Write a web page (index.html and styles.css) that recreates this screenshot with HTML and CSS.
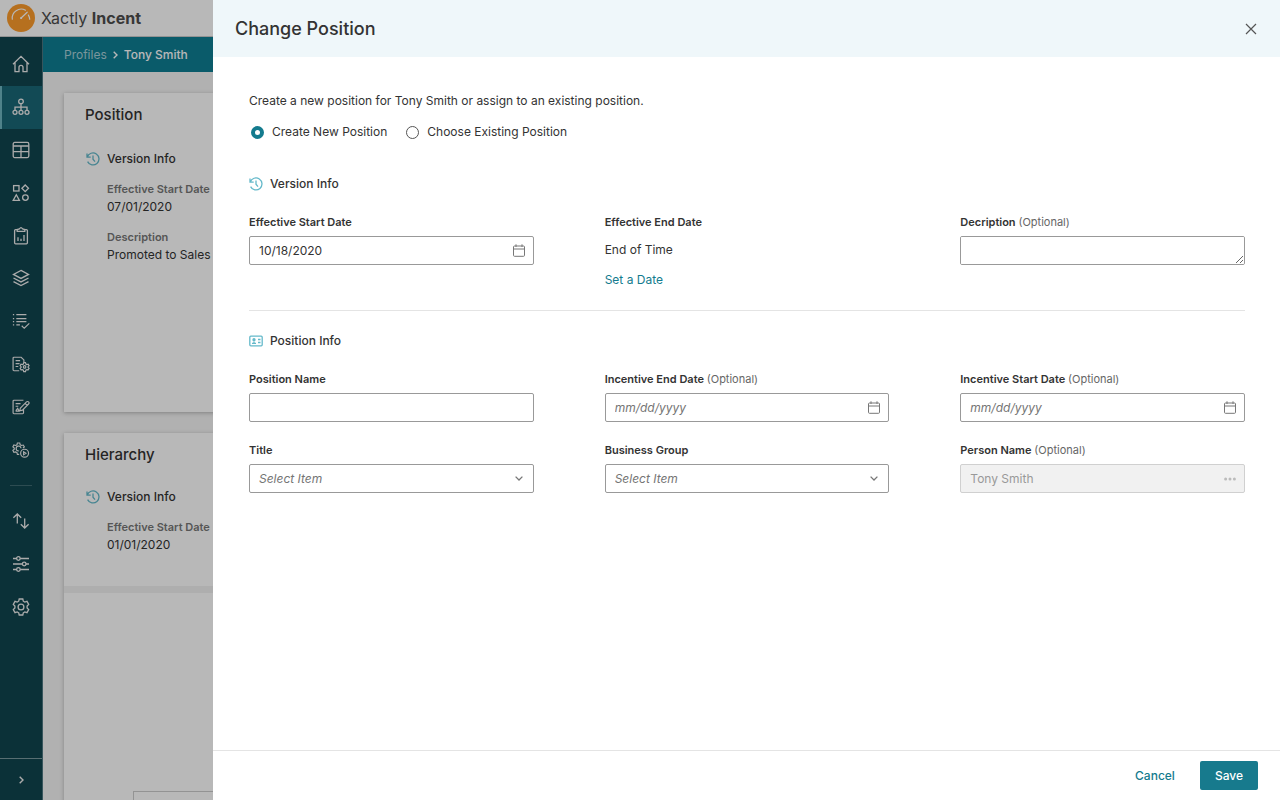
FILE: index.html
```html
<!doctype html>
<html lang="en">
<head>
<meta charset="utf-8">
<meta name="viewport" content="width=device-width, initial-scale=1">
<title>Change Position - Xactly Incent</title>
<link rel="stylesheet" href="styles.css">
</head>
<body>

<!-- shared icons -->
<svg class="sprite" aria-hidden="true">
	<symbol id="history" viewBox="0 0 14 14">
		<path d="M1 1.5v3.7h3.7M1.3 5A6 6 0 1 1 1.6 9.6M7 3.6v3.6l2 2.4" />
	</symbol>
	<symbol id="calendar" viewBox="0 0 12 13">
		<rect x=".5" y="2" width="11" height="10.3" rx="1" />
		<path d="M.5 5h11M3 .3V3M9 .3V3" />
	</symbol>
	<symbol id="chevron" viewBox="0 0 8 5">
		<path d="M.6 .6L4 4L7.4 .6" />
	</symbol>
</svg>

<div class="app">
	<header class="topbar">
		<svg class="logo" viewBox="0 0 28 28">
			<circle cx="14" cy="14" r="14" fill="#fc9c2c" />
			<path d="M5.3 15.2A9 9 0 0 1 18.5 6.2M20.2 8.2L13.8 14.2M21.4 11.1A9 9 0 0 1 22.7 15.2" fill="none" stroke="#fff" stroke-width="1.2" stroke-linecap="round" />
			<circle cx="14.2" cy="14" r="1" fill="#fff" />
		</svg>
		<span class="brand">Xactly <b>Incent</b></span>
	</header>

	<div class="main">
		<nav class="sidebar" aria-label="Main">
			<div class="nav-list">
				<a href="#" aria-label="Home"><svg viewBox="0 0 18 18"><path d="M1 9.2L9 1.4l8 7.8M3 7.6v9h4v-4.3a2 2 0 0 1 4 0v4.3h4v-9" /></svg></a>
				<a href="#" class="active" aria-label="Profiles"><svg viewBox="0 0 18 18"><circle cx="9" cy="3.4" r="2.3" /><circle cx="3" cy="14.3" r="2" /><circle cx="9" cy="14.3" r="2" /><circle cx="15" cy="14.3" r="2" /><path d="M9 5.7v6.6M3 12.3V9.2h12v3.1" /></svg></a>
				<a href="#" aria-label="Tables"><svg viewBox="0 0 18 18"><rect x="1.2" y="1.4" width="15.6" height="15.2" rx="1.5" /><path d="M1.2 5h15.6M1.2 10.7h15.6M9 5v11.6" /></svg></a>
				<a href="#" aria-label="Objects"><svg viewBox="0 0 18 18"><rect x="1.6" y="1.6" width="5.4" height="5.4" /><path d="M13.2 1l3.3 3.3l-3.3 3.3l-3.3-3.3zM4.3 10.8l3.1 5.6H1.2z" /><circle cx="13.4" cy="13.6" r="2.8" /></svg></a>
				<a href="#" aria-label="Reports"><svg viewBox="0 0 18 18"><path d="M5 2.6H3.6a1 1 0 0 0-1 1v12.2a1 1 0 0 0 1 1h10.8a1 1 0 0 0 1-1V3.6a1 1 0 0 0-1-1H13M5.2 4.4V2.6L7.4 2Q9-.6 10.6 2l2.2.6v1.8zM6 14v-3.7M9 14v-2.2M12 14V8" /></svg></a>
				<a href="#" aria-label="Plans"><svg viewBox="0 0 18 18"><path d="M9 1.4l7.5 4L9 9.4l-7.5-4zM1.5 9L9 12.9L16.5 9M1.5 12.6L9 16.6l7.5-4" /></svg></a>
				<a href="#" aria-label="Tasks"><svg viewBox="0 0 20 18"><path d="M1 2h1.4M1 6.3h1.4M1 9.7h1.4M1 13.3h1.4M4.8 2h11.200M4.8 6.3h11.2M4.8 9.7h11.2M4.8 13.3h4M10.8 14.3l2.8 2.8l5.6-5.4" /></svg></a>
				<a href="#" aria-label="Rules"><svg viewBox="0 0 20 18"><path d="M8 16.5H2.2a1 1 0 0 1-1-1v-13a1 1 0 0 1 1-1h8l3 3v2.4M4 5.2h5M4 8.5h4.4M4 11.8h3" /><circle cx="14" cy="12.2" r="1.4" /><path d="M13 7.5h2l.4 1.5l1.1.6l1.5-.4l1 1.7l-1.1 1.1v.8l1.1 1.1l-1 1.7l-1.5-.4l-1.1.6L15 17.4h-2l-.4-1.6l-1.1-.6l-1.5.4l-1-1.7l1.1-1.1V12L9 10.9l1-1.7l1.5.4l1.1-.6z" /></svg></a>
				<a href="#" aria-label="Edit documents"><svg viewBox="0 0 20 18"><path d="M12.8 11.5v4a1 1 0 0 1-1 1H2.2a1 1 0 0 1-1-1v-13a1 1 0 0 1 1-1h10.5M4 5.2h5.5M4 8.2h3M4 13.5h5M4.3 13l2-2.5l1.2 2.5M9.3 10.2l6.8-6.8a1.6 1.6 0 0 1 2.3 2.3l-6.8 6.8l-3 .7zM14.6 5l2.2 2.2" /></svg></a>
				<a href="#" aria-label="Run processes"><svg viewBox="0 0 20 18"><path d="M8 13.8H6l-.5-1.9l-1.4-.8l-2 .4L1 9.5l1.5-1.3V6.7L1 5.5l1.1-2l2 .5l1.4-.8L6 1.2h2.6l.5 2l1.4.8l2-.5l1.2 2l-1.4 1.3" /><path d="M7.5 10A2.7 2.7 0 1 1 10 7" /><circle cx="14" cy="12.6" r="4.4" /><path d="M12.9 10.9v3.4l2.6-1.7z" /></svg></a>
			</div>
			<hr>
			<div class="nav-list short">
				<a href="#" aria-label="Import and export"><svg viewBox="0 0 18 18"><path d="M5.3 11.5V2M1.4 5.8L5.3 2l3.9 3.8M12.7 6.5V16M8.8 12.2l3.900 3.8l3.9-3.8" /></svg></a>
				<a href="#" aria-label="Settings"><svg viewBox="0 0 18 18"><path d="M1 3.5h3.6M8.2 3.5H17M1 9h9.4M14 9h3M1 14.5h3.6M8.2 14.5H17" /><circle cx="6.4" cy="3.5" r="1.8" /><circle cx="12.2" cy="9" r="1.8" /><circle cx="6.4" cy="14.5" r="1.8" /></svg></a>
				<a href="#" aria-label="Setup"><svg viewBox="0 0 18 18"><circle cx="9" cy="9" r="2.9" /><path d="M7.2 1h3.6l.5 2.2l1.5.9l2.2-.7l1.7 3l-1.6 1.6v2l1.6 1.6l-1.7 3l-2.2-.7l-1.5.9l-.5 2.2H7.2l-.5-2.2l-1.5-.9l-2.2.7l-1.7-3L2.9 10V8L1.3 6.4l1.7-3l2.2.7l1.5-.9z" /></svg></a>
			</div>
			<button class="expand" type="button" aria-label="Expand menu"><svg viewBox="0 0 5 8"><path d="M.7 .7L4 4L.7 7.3" /></svg></button>
		</nav>

		<div class="page">
			<div class="breadcrumb">
				<a href="#">Profiles</a>
				<svg viewBox="0 0 5 8"><path d="M.7 .7L4 4L.7 7.3" /></svg>
				<span>Tony Smith</span>
			</div>
			<div class="cards">
				<section class="card position">
					<h2>Position</h2>
					<h3><svg class="icon"><use href="#history" /></svg>Version Info</h3>
					<dl>
						<dt>Effective Start Date</dt>
						<dd>07/01/2020</dd>
						<dt>Description</dt>
						<dd>Promoted to Sales</dd>
					</dl>
				</section>
				<section class="card hierarchy">
					<h2>Hierarchy</h2>
					<h3><svg class="icon"><use href="#history" /></svg>Version Info</h3>
					<dl>
						<dt>Effective Start Date</dt>
						<dd>01/01/2020</dd>
					</dl>
					<div class="chart"><div class="node"></div></div>
				</section>
			</div>
		</div>
	</div>
</div>

<div class="backdrop"></div>

<form class="drawer" role="dialog" aria-labelledby="drawer-title">
	<header class="drawer-head">
		<h1 id="drawer-title">Change Position</h1>
		<button class="close" type="button" aria-label="Close"><svg viewBox="0 0 12 12"><path d="M1 1l10 10M11 1L1 11" /></svg></button>
	</header>

	<div class="drawer-body">
		<p class="intro">Create a new position for Tony Smith or assign to an existing position.</p>
		<div class="radios">
			<label><input type="radio" name="mode" checked>Create New Position</label>
			<label><input type="radio" name="mode">Choose Existing Position</label>
		</div>

		<h2 class="section"><svg class="icon"><use href="#history" /></svg>Version Info</h2>
		<div class="fields">
			<div class="field">
				<label for="start">Effective Start Date</label>
				<div class="control">
					<input id="start" type="text" value="10/18/2020" placeholder="mm/dd/yyyy">
					<svg class="cal"><use href="#calendar" /></svg>
				</div>
			</div>
			<div class="field">
				<span class="label">Effective End Date</span>
				<span class="static">End of Time</span>
				<a class="set-date" href="#">Set a Date</a>
			</div>
			<div class="field">
				<label for="description">Decription <span>(Optional)</span></label>
				<textarea id="description" rows="1"></textarea>
			</div>
		</div>

		<hr>

		<h2 class="section">
			<svg class="icon" viewBox="0 0 14 14"><rect x=".8" y="2.2" width="12.4" height="9.6" rx="1" /><circle cx="5" cy="5.7" r="1" fill="currentColor" /><path d="M3 9.4h4M5 7.5v1.5M9 5.5h2.5M9 8.5h2.5" /></svg>Position Info
		</h2>
		<div class="fields">
			<div class="field">
				<label for="name">Position Name</label>
				<div class="control"><input id="name" type="text"></div>
			</div>
			<div class="field">
				<label for="inc-end">Incentive End Date <span>(Optional)</span></label>
				<div class="control">
					<input id="inc-end" type="text" placeholder="mm/dd/yyyy">
					<svg class="cal"><use href="#calendar" /></svg>
				</div>
			</div>
			<div class="field">
				<label for="inc-start">Incentive Start Date <span>(Optional)</span></label>
				<div class="control">
					<input id="inc-start" type="text" placeholder="mm/dd/yyyy">
					<svg class="cal"><use href="#calendar" /></svg>
				</div>
			</div>
			<div class="field">
				<label for="title">Title</label>
				<div class="control">
					<select id="title"><option>Select Item</option></select>
					<svg class="arrow"><use href="#chevron" /></svg>
				</div>
			</div>
			<div class="field">
				<label for="group">Business Group</label>
				<div class="control">
					<select id="group"><option>Select Item</option></select>
					<svg class="arrow"><use href="#chevron" /></svg>
				</div>
			</div>
			<div class="field">
				<label for="person">Person Name <span>(Optional)</span></label>
				<div class="control disabled">
					<input id="person" type="text" value="Tony Smith" disabled>
					<svg class="dots" viewBox="0 0 12 4"><circle cx="1.6" cy="2" r="1.5" /><circle cx="6" cy="2" r="1.5" /><circle cx="10.4" cy="2" r="1.5" /></svg>
				</div>
			</div>
		</div>
	</div>

	<footer class="drawer-foot">
		<button class="cancel" type="button">Cancel</button>
		<button class="save" type="submit">Save</button>
	</footer>
</form>

</body>
</html>
```
FILE: styles.css
```css
* { box-sizing: border-box; }
body { color: #333; font: 12px/18px Inter, "Open Sans", sans-serif; height: 100vh; margin: 0; overflow: hidden; }
h1, h2, h3, p, dl, dd { font-weight: 500; margin: 0; }
p, dd { font-weight: 400; }
a { color: #147b8e; text-decoration: none; }
button, input, select, textarea { color: inherit; font: inherit; margin: 0; }
button { background: none; border: none; cursor: pointer; padding: 0; }
svg { display: block; fill: none; flex: none; stroke: currentColor; }

.sprite { height: 0; position: absolute; width: 0; }
.icon { color: #64b9ca; height: 14px; stroke-width: 1.3; width: 14px; }

/* page behind the drawer */
.app { display: flex; flex-direction: column; height: 100vh; }

.topbar { align-items: center; border-bottom: 1px solid #ccc; display: flex; flex: none; gap: 6px; height: 37px; padding-left: 7px; }
.logo { height: 28px; stroke: none; width: 28px; }
.brand { color: #4d4d4d; font-size: 16px; }
.brand b { font-weight: 700; }

.main { display: flex; flex: 1; min-height: 0; }

.sidebar { background: #10444e; border-right: 1px solid #4d7780; color: #eee; display: flex; flex: none; flex-direction: column; padding-top: 6px; width: 43px; }
.nav-list { display: grid; grid-auto-rows: 1fr; height: 428px; }
.nav-list.short { height: 128px; }
.nav-list a { align-items: center; color: inherit; display: flex; justify-content: center; }
.nav-list svg { height: 18px; stroke-width: 1.3; width: 18px; }
.nav-list .active { background: #1a6776; border-left: 2px solid #6eb4c0; padding-right: 2px; }
.sidebar hr { border: none; border-top: 1px solid #3f6a72; margin: 14px 10px; width: 22px; }
.expand { border-top: 1px solid #7a999f; display: flex; height: 42px; justify-content: center; align-items: center; margin-top: auto; }
.expand svg { height: 8px; stroke-width: 1.4; width: 5px; }

.page { background: #f5f5f5; display: flex; flex: 1; flex-direction: column; min-width: 0; }
.breadcrumb { align-items: center; background: #0f7e94; color: #fff; display: flex; flex: none; font-weight: 500; gap: 6px; height: 35px; padding-left: 21px; }
.breadcrumb a { color: #a9d0d8; font-weight: 400; }
.breadcrumb svg { height: 8px; stroke-width: 1.4; width: 5px; }

.cards { display: flex; flex: 1; flex-direction: column; gap: 21px; min-height: 0; overflow: hidden; padding: 21px 21px 0; }
.card { background: #fff; box-shadow: 0 1px 4px #0004; flex: none; padding: 12px 0 0; }
.card h2 { font-size: 15px; line-height: 20px; padding-left: 21px; }
.card h3 { align-items: center; display: flex; font-size: 12px; gap: 7px; margin-top: 25px; padding-left: 22px; }
.card dl { margin: 12px 0 0 43px; }
.card dt { color: #777; font-size: 11px; font-weight: 600; }
.card dd { margin-bottom: 12px; }
.position { height: 319px; }
.hierarchy h3 { margin-top: 23px; }
.chart { border-top: 7px solid #f1f1f1; margin-top: 32px; padding: 198px 0 0 69px; }
.hierarchy dd { margin-bottom: 0; }
.node { border: 1px solid #ccc; height: 40px; }

.backdrop { background: rgba(0, 0, 0, .28); inset: 0; position: fixed; }

/* drawer */
.drawer { background: #fff; bottom: 0; display: flex; flex-direction: column; left: 213px; position: fixed; right: 0; top: 0; }
.drawer-head { align-items: center; background: #eff7fa; display: flex; flex: none; height: 57px; justify-content: space-between; padding: 0 23px 0 22px; }
.drawer-head h1 { font-size: 18px; line-height: 24px; }
.close svg { color: #555; height: 12px; stroke-width: 1.2; width: 12px; }

.drawer-body { flex: 1; overflow: auto; padding: 35px 35px 0 36px; }
.radios { display: flex; gap: 17px; margin-top: 13px; }
.radios label { align-items: center; display: flex; gap: 8px; padding-left: 2px; }
.radios input { appearance: none; border: 1px solid #555; border-radius: 50%; height: 13px; width: 13px; }
.radios input:checked { border: 4px solid #147b8e; }

.section { align-items: center; display: flex; font-size: 12px; gap: 7px; }
.radios + .section { margin-top: 34px; }
.drawer-body hr { border: none; border-top: 1px solid #e4e4e4; margin: 21px 0; }

.fields { column-gap: 71px; display: grid; grid-template-columns: repeat(3, 1fr); margin-top: 20px; row-gap: 19px; }
.field { display: flex; flex-direction: column; gap: 5px; min-width: 0; }
.field label, .label { font-size: 11px; font-weight: 600; }
.field label span { color: #666; font-weight: 400; }
.static { height: 30px; line-height: 28px; }
.set-date { align-self: flex-start; }

.control, textarea { background: #fff; border: 1px solid #999; border-radius: 2px; height: 29px; }
.control { align-items: center; display: flex; padding-right: 8px; }
.control input, .control select { appearance: none; background: none; border: none; flex: 1; height: 100%; min-width: 0; outline: none; padding: 0 9px; }
.control select, .control input::placeholder { color: #757575; font-style: italic; opacity: 1; }
textarea { display: block; padding: 5px 9px; resize: vertical; width: 100%; }
.cal { color: #777; height: 13px; width: 12px; }
.arrow { color: #777; height: 5px; margin-right: 2px; stroke-width: 1.3; width: 8px; }
.control.disabled { background: #f1f1f1; border-color: #d0d0d0; color: #999; }
.dots { color: #bbb; fill: currentColor; height: 4px; stroke: none; width: 12px; }

.drawer-foot { align-items: center; border-top: 1px solid #e4e4e4; display: flex; flex: none; gap: 25px; height: 50px; justify-content: flex-end; padding-right: 22px; }
.drawer-foot button { font-weight: 500; height: 29px; }
.cancel { color: #147b8e; }
.drawer-foot .save { background: #177a8d; border-radius: 2px; color: #fff; padding: 0 15px; }
```
